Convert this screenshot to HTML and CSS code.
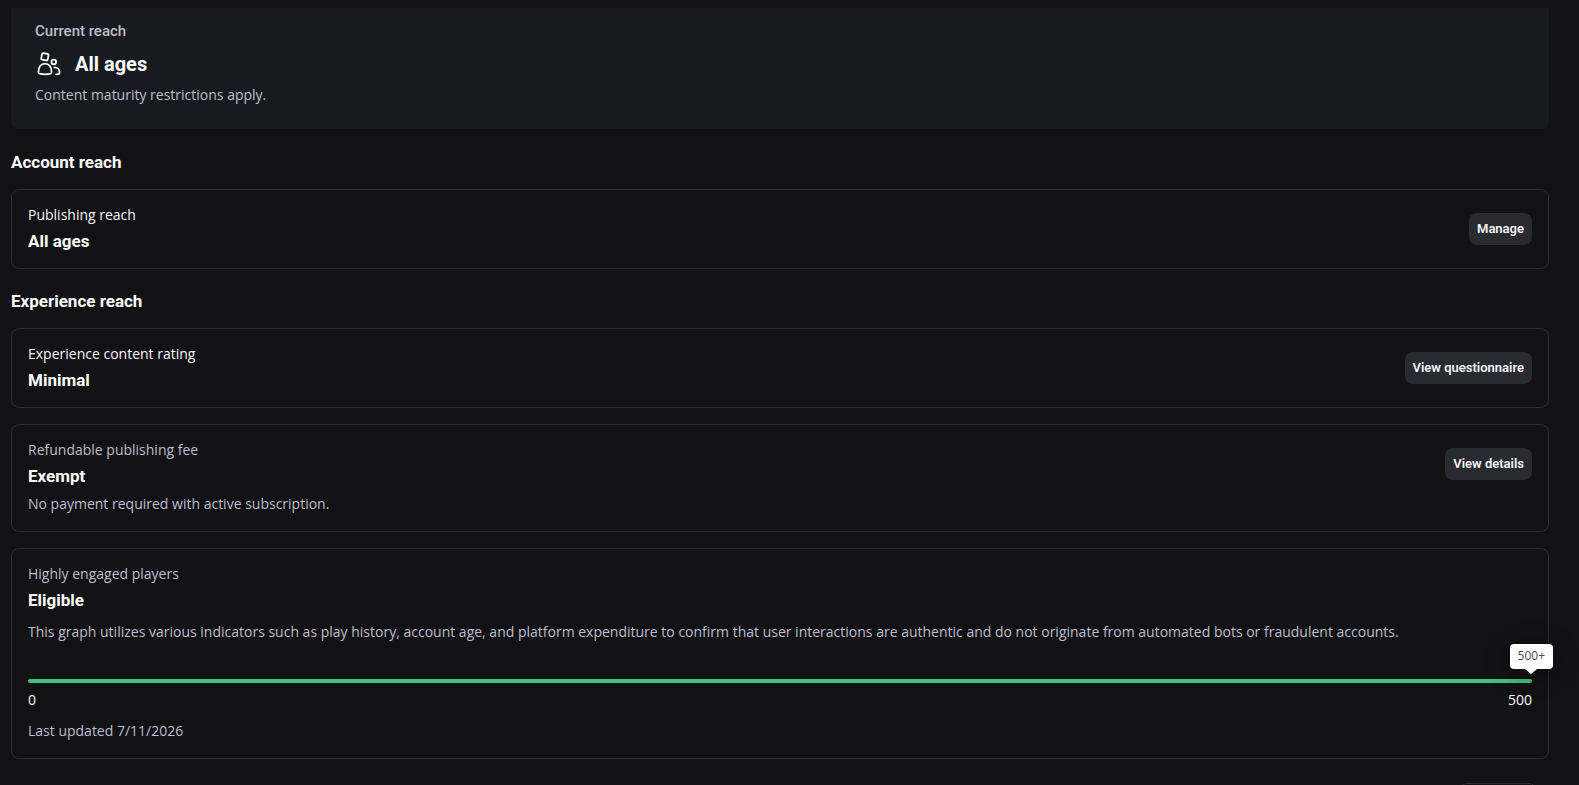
FILE: index.html
```html
<!DOCTYPE html>
<html lang="en">
<head>
<meta charset="utf-8">
<title>Audience reach</title>
<link rel="stylesheet" href="styles.css">
</head>
<body>
<main class="page">
  <section class="hero">
    <p class="hero-label">Current reach</p>
    <div class="hero-value">
      <svg class="people" viewBox="0 0 28 28" width="28" height="28" fill="none" stroke="currentColor" stroke-width="1.8" stroke-linecap="round" stroke-linejoin="round" aria-hidden="true">
        <rect x="6.600" y="3.500" width="6.600" height="6.600" rx="1" transform="rotate(11 9.900 6.800)"/>
        <path d="M10 13.600c3.800 0 6.600 3.200 6.600 8.700 0 1.400-2.600 2-6.600 2s-6.600-.6-6.600-2c0-5.500 2.800-8.700 6.600-8.700z"/>
        <circle cx="18.800" cy="12" r="2.300"/>
        <path d="M19.400 17.400c3 0 5.200 2.100 5.200 5.300 0 1.200-1.200 1.600-3.500 1.600"/>
      </svg>
      <strong class="hero-title">All ages</strong>
    </div>
    <p class="muted">Content maturity restrictions apply.</p>
  </section>

  <section class="group">
    <h2 class="heading">Account reach</h2>
    <article class="card">
      <div class="card-text">
        <p class="label">Publishing reach</p>
        <h3 class="value">All ages</h3>
      </div>
      <button class="button" type="button">Manage</button>
    </article>
  </section>

  <section class="group">
    <h2 class="heading">Experience reach</h2>
    <article class="card">
      <div class="card-text">
        <p class="label">Experience content rating</p>
        <h3 class="value">Minimal</h3>
      </div>
      <button class="button" type="button">View questionnaire</button>
    </article>
    <article class="card">
      <div class="card-text">
        <p class="muted">Refundable publishing fee</p>
        <h3 class="value">Exempt</h3>
        <p class="muted note">No payment required with active subscription.</p>
      </div>
      <button class="button" type="button">View details</button>
    </article>
    <article class="card">
      <div class="card-text">
        <p class="muted">Highly engaged players</p>
        <h3 class="value">Eligible</h3>
        <p class="muted about">This graph utilizes various indicators such as play history, account age, and platform expenditure to confirm that user interactions are authentic and do not originate from automated bots or fraudulent accounts.</p>
        <div class="meter"><span class="tooltip">500+</span></div>
        <div class="scale"><span>0</span><span>500</span></div>
        <p class="muted updated">Last updated 7/11/2026</p>
      </div>
    </article>
  </section>
  <footer class="actions"><button class="outline" type="button" aria-label="More"></button></footer>
</main>
</body>
</html>
```
FILE: styles.css
```css
* { box-sizing: border-box; }
html { background: #121214; }
body {
  margin: 0;
  height: 100vh;
  overflow: hidden;
  background: #121214;
  color: #f7f7f8;
  font-family: "Open Sans", "Noto Sans", sans-serif;
  font-size: 14px;
  line-height: 20px;
}
p, h2, h3 { margin: 0; }
.page { padding: 8px 30px 0 11px; }
.hero {
  margin-bottom: 21px;
  padding: 13px 24px 24px;
  border-radius: 0 0 8px 8px;
  background: #191a1f;
}
.hero-label, .hero-title, .heading, .value, .button { font-family: Roboto, "Open Sans", sans-serif; }
.hero-label { color: #bcbecb; font-size: 15px; font-weight: 500; }
.hero-value { display: flex; align-items: center; gap: 12px; margin: 9px 0 7px; }
.hero-title { color: #fff; font-size: 20px; font-weight: 700; line-height: 28px; }
.people { flex: none; color: #fff; }
.muted { color: #bcbecb; }
.group { margin-bottom: 20px; }
.heading { margin-bottom: 15px; color: #fff; font-size: 17px; font-weight: 700; line-height: 24px; }
.card {
  display: flex;
  align-items: flex-start;
  justify-content: space-between;
  gap: 16px;
  padding: 15px 16px;
  border: 1px solid #2e2f35;
  border-radius: 8px;
}
.card + .card { margin-top: 16px; }
.card-text { flex: 1; min-width: 0; }
.value { margin-top: 4px; color: #fff; font-size: 17px; font-weight: 700; line-height: 24px; }
.note { margin: 6px 0 2px; }
.button {
  flex: none;
  height: 32px;
  margin-top: 8px;
  padding: 0 8px;
  border: 0;
  border-radius: 8px;
  background: #292a32;
  color: #f7f7f8;
  font-size: 13px;
  font-weight: 600;
  line-height: 20px;
}
.about { margin-top: 10px; }
.meter {
  position: relative;
  height: 4px;
  margin-top: 37px;
  border-radius: 2px;
  background: #3cc481;
}
.tooltip {
  position: absolute;
  right: -21px;
  bottom: 14px;
  padding: 2px 8px 3px;
  border-radius: 4px;
  background: #fff;
  color: #494b57;
  font-size: 12px;
  font-weight: 500;
  box-shadow: 0 4px 24px rgba(0, 0, 0, 0.4);
}
.tooltip::after {
  content: "";
  position: absolute;
  top: 100%;
  left: calc(50% - 6px);
  border: 6px solid transparent;
  border-top: 5px solid #fff;
  border-bottom: 0;
}
.scale { display: flex; justify-content: space-between; margin-top: 7px; }
.updated { margin: 11px 0 2px; }
.actions { display: flex; justify-content: flex-end; padding: 4px 12px 0 0; }
.outline { width: 78px; height: 32px; border: 1px solid #2e2f35; border-radius: 8px; background: transparent; }
```
